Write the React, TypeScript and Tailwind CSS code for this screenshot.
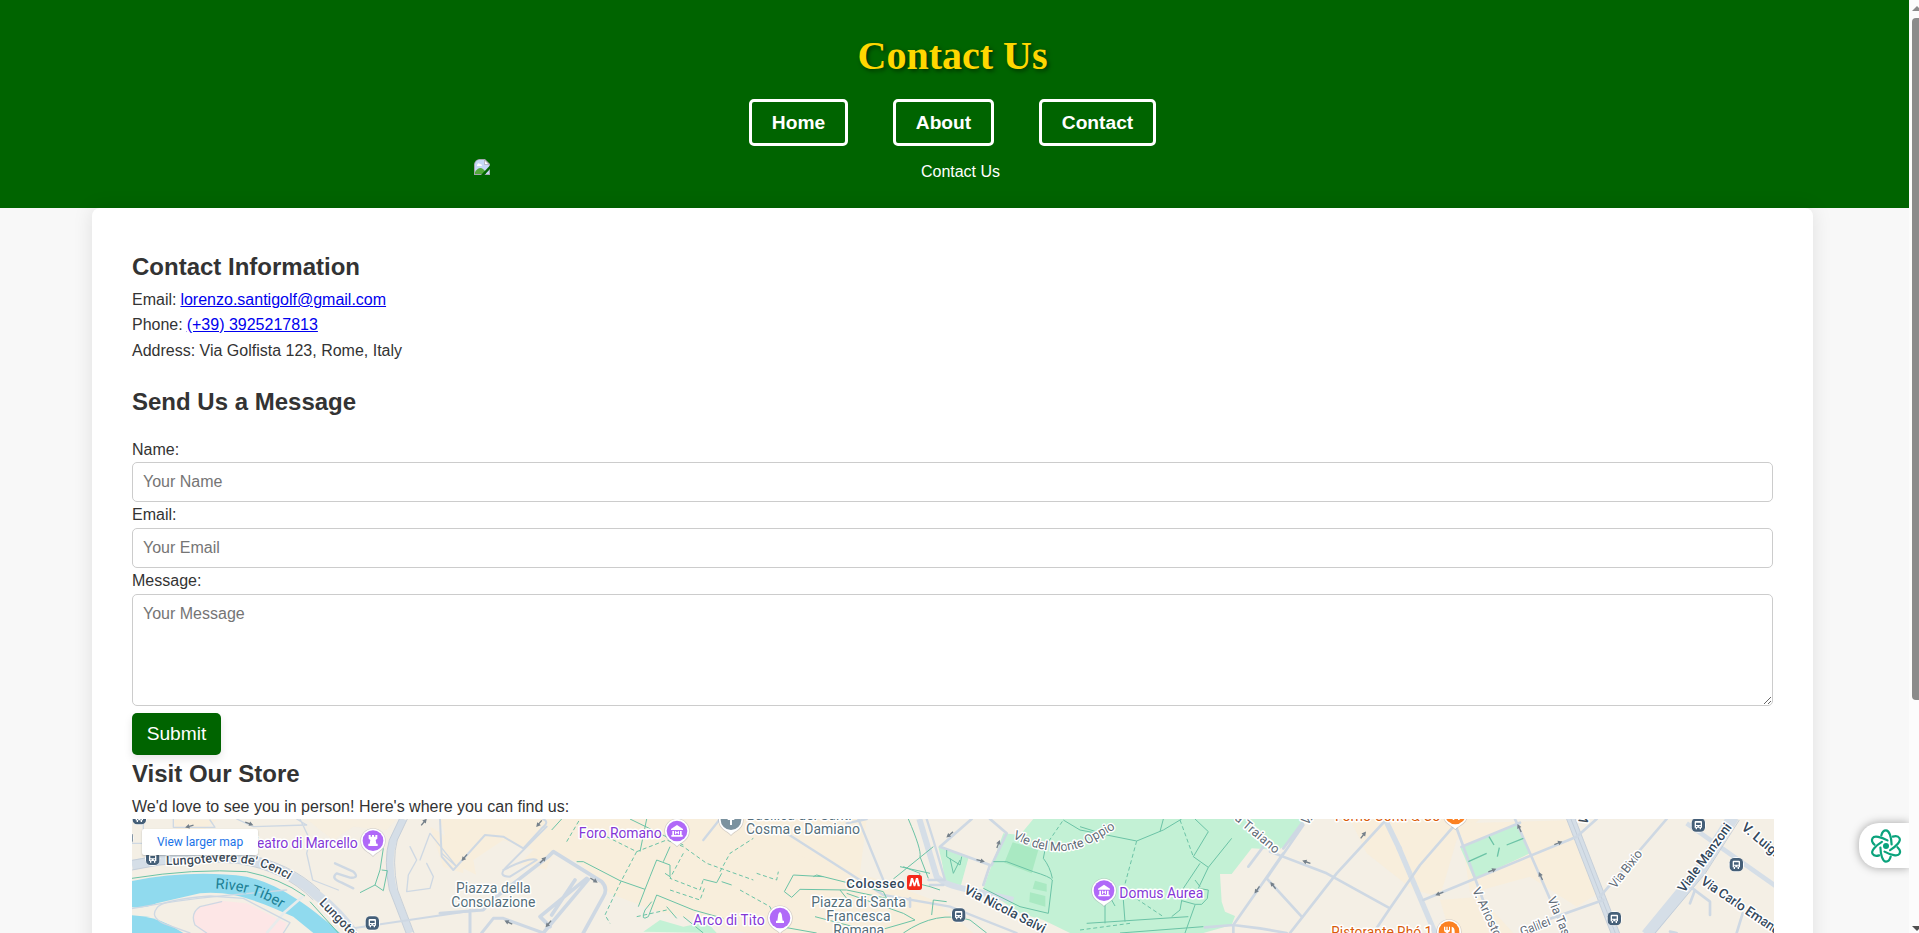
import React from "react";

const halo = "fill-none";

type LabelProps = {
  x: number;
  y: number;
  w: number;
  children: string;
  fill?: string;
  size?: number;
  rotate?: number;
  weight?: number;
};

function Label({ x, y, w, children, fill = "#546e7a", size = 42, rotate = 0, weight = 400 }: LabelProps) {
  return (
    <text
      x={x}
      y={y}
      transform={`rotate(${rotate} ${x} ${y})`}
      textLength={w}
      fill={fill}
      fontSize={size}
      fontWeight={weight}
      stroke="#fff"
      strokeWidth={9}
      strokeLinejoin="round"
      paintOrder="stroke"
    >
      {children}
    </text>
  );
}

function CurvedLabel({ id, d, w, children, fill, size = 38, weight = 500, outline = "#fff" }: { id: string; d: string; w: number; children: string; fill: string; size?: number; weight?: number; outline?: string }) {
  return (
    <>
      <path id={id} d={d} className={halo} />
      <text fill={fill} fontSize={size} fontWeight={weight} stroke={outline} strokeWidth={8} strokeLinejoin="round" paintOrder="stroke">
        <textPath href={`#${id}`} textLength={w}>{children}</textPath>
      </text>
    </>
  );
}

function Pin({ x, y, fill = "#b069f8", kind }: { x: number; y: number; fill?: string; kind: "museum" | "tower" | "info" | "food" | "obelisk" }) {
  return (
    <g transform={`translate(${x} ${y})`}>
      <path d="M0 49 C-5 42 -14 38 -24 30 A38 38 0 1 1 24 30 C14 38 5 42 0 49Z" fill="#8d8d99" opacity=".35" />
      <path d="M0 46 C-5 39 -14 36 -23 28 A36 36 0 1 1 23 28 C14 36 5 39 0 46Z" fill="#fff" />
      <circle r="31" fill={fill} />
      {kind === "museum" && <path d="M-18 -6 L0 -18 L18 -6 V-3 H-18Z M-14 0 H-9 V12 H-14Z M9 0 H14 V12 H9Z M-17 12 H17 V17 H-17Z M-6 10 V-1 L0 4 L6 -1 V10 H3 V5 L0 8 L-3 5 V10Z" fill="#fff" />}
      {kind === "tower" && <path d="M-13 -17 H-7 V-12 H-3 V-17 H3 V-12 H7 V-17 H13 V-6 L8 -2 L10 9 H14 V16 H-14 V9 H-10 L-8 -2 L-13 -6Z" fill="#fff" />}
      {kind === "obelisk" && <path d="M0 -19 L5 -12 L8 8 H12 V15 H-12 V8 H-8 L-5 -12Z" fill="#fff" />}
      {kind === "info" && <path d="M-3 -14 H3 V16 H-3Z M-10 -4 H10 V1 H-10Z" fill="#fff" />}
      {kind === "food" && <path d="M-15 -15 V-5 Q-15 2 -8 3 V18 H-3 V3 Q3 2 3 -5 V-15 H0 V-5 H-4 V-15 H-8 V-5 H-11 V-15Z M8 18 V-15 Q17 -13 17 0 V4 H13 V18Z" fill="#fff" />}
    </g>
  );
}

function Transit({ x, y }: { x: number; y: number }) {
  return (
    <g transform={`translate(${x} ${y})`}>
      <circle r="23" fill="#fff" />
      <rect x="-20" y="-20" width="40" height="40" rx="13" fill="#455f78" />
      <path d="M-8 -12 H8 Q11 -12 11 -9 V8 H8 V13 H4 V8 H-4 V13 H-8 V8 H-11 V-9 Q-11 -12 -8 -12Z" fill="#fff" />
      <path d="M-7 -7 H7 V0 H-7Z M-7 3 H-3 V6 H-7Z M3 3 H7 V6 H3Z" fill="#455f78" />
    </g>
  );
}

function Arrow({ x, y, r }: { x: number; y: number; r: number }) {
  return (
    <path transform={`translate(${x} ${y}) rotate(${r})`} d="M-13 -2 H0 V-7 L13 0 L0 7 V2 H-13Z" fill="#75808a" />
  );
}

const ROAD = "#ced8e3";
const PATH = "#6bc3a6";

function RomeMap() {
  return (
    <svg viewBox="36 27 4926 342" className="block h-full w-full" fontFamily="Roboto, sans-serif">
      <rect x="0" y="0" width="5000" height="400" fill="#f4efe5" />

      {/* built-up areas */}
      <g fill="#f8eedc">
        <path d="M560 27 H830 L800 60 L700 50 L640 90 L600 60Z" opacity=".6" />
        <path d="M960 27 H2240 L2220 190 L2120 369 H1880 L1600 300 L1480 255 L1380 200 L1190 160 L1080 200 L1000 160Z" />
        <path d="M1060 150 L1150 90 L1240 120 L1150 210 L1080 260Z" fill="#f4efe5" />
        <path d="M2010 130 L2280 210 L2440 270 L2560 369 H1900 L1960 200Z" />
        <path d="M1300 130 L1380 160 L1460 240 L1400 369 H1200 L1250 240Z" fill="#f4efe5" />
        <path d="M160 30 H290 L250 60 H170Z" />
        <path d="M930 50 L1030 110 V190 L970 170Z" />
        <path d="M3690 27 H4080 L4010 90 L3960 260 L3880 240 L3740 130Z" />
        <path d="M4020 40 L4360 30 L4450 240 L4370 290 L4230 200 L4050 250Z" />
        <path d="M3960 270 L4080 260 L4180 369 H3990Z" />
      </g>

      {/* parks */}
      <g fill="#c3f1d5">
        <path d="M2740 27 H3560 L3520 90 L3475 120 L3395 115 L3335 192 H3300 L3305 275 L3315 305 L3345 318 L3335 345 L3250 369 H2850 L2770 330 L2700 310 L2590 235 L2650 70 L2700 75Z" />
        <path d="M2460 110 L2540 140 L2545 145 L2523 225 L2475 215Z" />
        <path d="M2455 110 L2545 140 L2520 225 L2480 215Z" />
        <path d="M1570 365 L1620 330 L1690 350 L1760 335 L1790 369Z" />
        <path d="M4020 110 L4190 45 L4230 130 L4062 208Z" />
      </g>
      <g fill="#a9e9c2">
        <path d="M2678 97 L2755 120 L2735 190 L2653 158Z" />
        <path d="M2745 212 L2780 222 V245 L2738 236Z M2730 247 L2776 258 V290 L2728 276Z" />
      </g>

      {/* river */}
      <path d="M36 213 C150 190 270 185 380 200 C470 220 560 280 660 369 H580 L520 320 C430 280 340 240 240 250 L110 280 Q80 295 36 292Z" fill="#90daee" />
      <path d="M36 316 Q100 320 150 345 L190 369 H36Z" fill="#90daee" />
      <path d="M300 272 L380 280 L500 340 L490 369 H250 L225 345 Q210 310 240 290Z" fill="#fde6e6" />
      <path d="M490 310 L550 258 M490 310 L440 369" stroke="#e8ecec" strokeWidth="8" fill="none" />

      {/* wide roads */}
      <g fill="none" stroke="#d5dee7" strokeLinejoin="round">
        <path d="M36 165 Q200 130 360 145 Q500 170 590 255 Q660 310 700 369" strokeWidth="30" />
        <path d="M850 27 L820 90 Q800 150 820 240 L870 369" strokeWidth="22" />
        <path d="M4350 20 L4490 380" strokeWidth="24" />
        <path d="M4840 20 L4740 180 L4580 375" strokeWidth="36" />
        <path d="M4700 40 L4970 230" strokeWidth="14" />
        <path d="M3835 110 L3950 380" strokeWidth="16" />
        <path d="M3795 27 L3840 120" strokeWidth="16" />
        <path d="M2398 27 L2450 200 Q2470 225 2550 240 L2680 270" strokeWidth="18" />
      </g>
      <g fill="none" stroke="#bfcad6" strokeWidth="2.500">
        <path d="M36 151 Q200 116 365 131 Q510 156 600 242 M36 180 Q200 144 352 160 Q490 180 580 270" />
        <path d="M838 27 L808 90 Q790 150 808 240 L858 369 M862 27 L832 90 Q815 150 833 240 L882 369" />
        <path d="M4337 20 L4477 380 M4350 20 L4490 380 M4363 20 L4503 380" />
        <path d="M4858 30 L4756 190 L4600 375" />
      </g>

      {/* streets */}
      <g fill="none" stroke={ROAD} strokeWidth="6" strokeLinecap="round" strokeLinejoin="round">
        <path d="M36 100 H70 V40 M160 27 V52 H285 L270 30 M350 27 L400 50 L560 45 L530 27 M540 27 L570 90 L560 130 L578 210 L655 240 M36 296 Q170 270 320 256 L500 240" strokeWidth="4" />
        <path d="M645 160 L700 185 Q720 205 690 203 L650 190 Q630 205 665 218 L700 235" strokeWidth="7" />
        <path d="M110 295 Q120 270 270 258 L370 265 L510 338 L490 369 M110 295 Q90 320 130 340 L210 369 M305 275 L240 290 Q210 310 225 345 L260 369" strokeWidth="4" />
        <path d="M870 110 L890 150 L865 195 L860 245 L930 235 L940 200 L920 160 M900 150 L930 70 L1010 170 L965 130" strokeWidth="4" />
        <path d="M700 355 L1070 300 M960 27 L965 140 L1000 180 L1095 75 L1150 80 L1210 115 L1265 55 Q1290 35 1270 28 M1280 50 L1160 170 Q1130 200 1170 200 L1250 150 Q1230 140 1150 180" />
        <path d="M960 310 L1090 300 L1110 280 M1050 300 V369 M1085 369 L1120 325 L1150 325 L1270 369" strokeWidth="9" />
        <path d="M1110 275 L1285 140 L1300 125 L1445 215 Q1465 235 1450 260 L1390 369 M1400 205 L1260 320 L1290 350 M1405 208 L1270 369 M1295 315 L1365 210" strokeWidth="11" />
        <path d="M1800 27 L1750 90 M2000 70 L2290 255 L2490 290 L2690 369 M2215 27 L2290 210 M2180 40 L2240 27 M2420 27 L2440 90 L2475 210 H2425" strokeWidth="7" />
        <path d="M2555 27 L2460 110 L2610 165 L2590 225 M2610 27 L2660 70 L2615 165 M2430 225 H2470 M2370 265 V290" strokeWidth="8" />
        <path d="M3555 27 L3490 115 M3430 110 L3385 170 M3450 125 L3620 190 L3810 295 L3760 369 M3800 27 L3650 190 L3510 369 M3490 130 L3340 345 L3420 355 L3500 369 M3440 205 L3545 320 M3550 45 L3440 205 M3810 295 L3900 165 L4000 50 M3255 352 L3340 345 V369" strokeWidth="8" />
        <path d="M3910 270 L4370 80 L4430 27 M4010 55 L4100 300 M4185 27 L4335 369 M4025 110 L4200 38 M4450 270 L4280 330 M4440 260 L4640 27 M4710 230 L4770 275 V315 M4725 240 L4710 280 M4868 310 L4850 369 M4650 365 L4670 369" strokeWidth="8" />
      </g>

      {/* footpaths */}
      <g fill="none" stroke={PATH} strokeWidth="3">
        <path d="M36 205 Q220 175 380 185 Q480 205 555 258 M570 275 L655 369 M790 115 L780 180 L765 225 L720 248 M765 225 L790 242 L802 182 L785 180" />
        <path d="M1295 60 L1325 27 M1530 27 L1690 105 M1580 27 L1560 125 M1370 155 L1390 155 L1500 212 L1575 238 L1590 200 L1610 150 L1650 165 V200 L1635 190 M1575 238 L1555 290 M1610 255 L1720 300 L1810 325 M1610 255 L1585 320 Q1560 335 1575 300 L1595 275 M1640 290 L1670 325 M1690 320 L1750 369 M1650 110 L1630 155 M1750 208 L1790 218 L1805 190 M1805 215 L1835 225" />
        <path strokeDasharray="12 8" d="M1340 95 L1380 27 M1460 80 L1550 125 L1640 90 L1690 110 L1760 160 L1900 210 M1550 125 L1500 220 L1455 315 L1470 340 M1800 185 L1830 130 L1900 85 M1690 130 L1650 205 L1740 240 L1750 208 M1650 240 L1740 270 L1755 230 M1860 240 L1950 290 L1960 315 M1910 190 L1970 210 L1975 185 M1640 300 L1550 320" />
        <path d="M2365 27 Q2405 120 2400 140 L2425 205 M2320 207 L2440 110 M2350 170 L2400 190 L2390 220 L2430 230 L2460 240 M2340 170 L2430 190 M2080 200 L2090 195 L2290 245 L2300 265 L2180 240 L2040 238 L2015 262 L1993 245 L2020 195 L2110 200 M1955 345 L2090 369 M2180 250 L2350 310 L2385 330 L2250 369 M2160 240 L2180 265 M2085 320 L2200 350 M2350 369 Q2450 300 2550 330 L2600 369 M2435 315 L2440 270 L2480 275" />
        <path d="M2480 120 V140 L2520 165 L2525 140 M2490 145 L2500 190 L2520 150" />
        <path d="M2590 235 L2700 290 L2785 310 L2797 210 Q2790 200 2740 185 L2660 155 L2620 155 M2797 205 Q2790 170 2770 145 L2775 120 M2830 30 L2880 60 L2960 75 M2880 50 L2960 75 L3050 93 L3130 60 L3185 27 M3120 65 L3130 27 M3225 27 L3265 65 L3220 140 L3265 172 L3335 85 M3265 172 L3235 235 L3265 240 L3262 265 L3245 283 L3225 283 L3185 272 L3190 235 L3240 160 M3225 210 L3240 230 M3185 272 L3180 300 L3155 320 M3225 285 L3195 369 M2900 340 L3205 320 M3000 369 L3250 350 M2955 285 V340 M3010 270 L3015 335 M2975 270 L2985 288" />
        <path strokeDasharray="12 8" d="M3050 93 L3010 240 L3130 320 M3180 30 L3220 140 M2775 110 L2830 30 M2880 360 L3030 340" />
        <path d="M4045 155 L4100 130 M4107 80 L4122 105 M4138 113 L4132 140 M4160 105 L4210 85" strokeWidth="4" />
      </g>

      {/* one-way arrows */}
      <Arrow x={208} y={49} r={165} />
      <Arrow x={388} y={41} r={20} />
      <Arrow x={912} y={36} r={-50} />
      <Arrow x={1257} y={41} r={130} />
      <Arrow x={1033} y={143} r={130} />
      <Arrow x={1269} y={150} r={-45} />
      <Arrow x={1422} y={211} r={32} />
      <Arrow x={1165} y={337} r={205} />
      <Arrow x={1285} y={342} r={130} />
      <Arrow x={2489} y={74} r={140} />
      <Arrow x={2582} y={152} r={15} />
      <Arrow x={2635} y={102} r={-70} />
      <Arrow x={3559} y={156} r={200} />
      <Arrow x={3730} y={75} r={-52} />
      <Arrow x={3411} y={240} r={125} />
      <Arrow x={3459} y={226} r={232} />
      <Arrow x={3958} y={251} r={158} />
      <Arrow x={4117} y={181} r={-22} />
      <Arrow x={4315} y={99} r={-22} />
      <Arrow x={4198} y={54} r={245} />
      <Arrow x={4262} y={198} r={245} />

      {/* transit stops */}
      <Transit x={58} y={23} />
      <Transit x={18} y={84} />
      <Transit x={98} y={145} />
      <Transit x={757} y={339} />
      <Transit x={2516} y={315} />
      <Transit x={4735} y={45} />
      <Transit x={4849} y={164} />
      <Transit x={4483} y={326} />
      <rect x="2361" y="195" width="45" height="45" rx="8" fill="#f5291b" />
      <path d="M2367 229 L2373 204 H2379 L2383.500 220 L2388 204 H2394 L2400 229 H2393 L2390 215 L2386 229 H2381 L2377 215 L2374 229Z" fill="#fff" />

      {/* street and place names */}
      <CurvedLabel id="cenci" d="M138 165 Q210 165 290 155 Q420 152 510 212" w={378} fill="#3c4a57">Lungotevere de' Cenci</CurvedLabel>
      <CurvedLabel id="tiber" d="M286 236 Q400 240 484 296" w={208} size={44} weight={400} fill="#1c8094" outline="#90daee">River Tiber</CurvedLabel>
      <Label x={596} y={280} w={212} rotate={46} size={38} weight={500} fill="#3c4a57">Lungotevere</Label>
      <CurvedLabel id="oppio" d="M2677 84 Q2800 150 2900 105 L3000 48" w={332} fill="#5f6b76" weight={400}>Vle del Monte Oppio</CurvedLabel>
      <Label x={3342} y={28} w={162} rotate={40} size={38} fill="#5f6b76">a Traiano</Label>
      <Label x={3562} y={47} w={80} rotate={-50} size={38} fill="#5f6b76">V. Me</Label>
      <Label x={4398} y={46} w={40} rotate={-62} size={38} weight={500} fill="#3c4a57">Vi</Label>
      <Label x={2530} y={248} w={268} rotate={27} size={40} weight={500} fill="#33475b">Via Nicola Salvi</Label>
      <Label x={4056} y={240} w={160} rotate={65} size={38} fill="#5f6b76">V. Ariosto</Label>
      <Label x={4282} y={266} w={164} rotate={68} size={38} fill="#5f6b76">Via Tasso</Label>
      <Label x={4206} y={379} w={95} rotate={-22} size={38} fill="#5f6b76">Galilei</Label>
      <Label x={4486} y={238} w={135} rotate={-52} size={38} fill="#5f6b76">Via Bixio</Label>
      <Label x={4693} y={250} w={245} rotate={-54} size={40} weight={500} fill="#33475b">Viale Manzoni</Label>
      <Label x={4862} y={56} w={134} rotate={40} size={40} weight={500} fill="#33475b">V. Luigi</Label>
      <Label x={4740} y={220} w={328} rotate={34} size={40} weight={500} fill="#33475b">Via Carlo Emanuele</Label>
      <Label x={389} y={115} w={324} fill="#8437d6">Teatro di Marcello</Label>
      <Label x={1008} y={248} w={224}>Piazza della</Label>
      <Label x={994} y={291} w={252}>Consolazione</Label>
      <Label x={1376} y={84} w={249} fill="#8437d6">Foro Romano</Label>
      <Label x={1880} y={30} w={315}>Basilica dei Santi</Label>
      <Label x={1878} y={72} w={342}>Cosma e Damiano</Label>
      <Label x={1720} y={345} w={214} fill="#8437d6">Arco di Tito</Label>
      <Label x={2179} y={234} w={175} size={40} fill="#33475b" weight={500}>Colosseo</Label>
      <Label x={2074} y={291} w={284}>Piazza di Santa</Label>
      <Label x={2119} y={333} w={193}>Francesca</Label>
      <Label x={2140} y={375} w={152}>Romana</Label>
      <Label x={2998} y={264} w={252} fill="#8437d6">Domus Aurea</Label>
      <Label x={3645} y={33} w={316} fill="#d95c0b">Forno Conti &amp; Co</Label>
      <Label x={3634} y={382} w={303} fill="#d95c0b">Ristorante Rhó 1</Label>

      <Pin x={759} y={92} kind="tower" />
      <Pin x={1671} y={63} kind="museum" />
      <Pin x={1833} y={29} fill="#7b929f" kind="info" />
      <Pin x={1980} y={324} kind="obelisk" />
      <Pin x={2952} y={242} kind="museum" />
      <Pin x={4006} y={12} fill="#fb8123" kind="food" />
      <Pin x={3987} y={365} fill="#fb8123" kind="food" />
    </svg>
  );
}

function BrokenImage() {
  return (
    <svg width="16" height="16" viewBox="0 0 16 16" className="block shrink-0">
      <path d="M0 5 Q1 1 5 0 H11 L16 5 V16 H0Z" fill="#a5a5b0" />
      <path d="M1 5 Q2 1 5 1 H10.500 L15 5.500 V15 H1Z" fill="#c6d8f7" />
      <path d="M10.500 1 V5.500 H15Z" fill="#fff" stroke="#a5a5b0" strokeWidth=".7" />
      <path d="M3 6 Q4 3 6 5 Q8 5 8 7 H3Z" fill="#fff" />
      <path d="M1 15 V13 Q5 7 9 10 L12 13 V15Z" fill="#53a83a" />
      <path d="M7 16 L16 6.500 V10 L10.500 16Z" fill="#006400" />
    </svg>
  );
}

function AtomIcon() {
  return (
    <svg width="34" height="36" viewBox="-17 -18 34 36" fill="none" stroke="#0aa37c" strokeWidth="2.200" strokeLinecap="round">
      <circle r="3" fill="#0aa37c" stroke="none" />
      {[0, 60, 120, 180, 240, 300].map((angle) => (
        <path key={angle} transform={`rotate(${angle})`} d="M-4.700 -10.500 C-3.900 -13.800 -2 -15.600 0 -15.600 C3.300 -15.600 5.400 -9 5.600 -1.500" />
      ))}
    </svg>
  );
}

const navItems = [
  { label: "Home", width: "w-[99px]" },
  { label: "About", width: "w-[101px]" },
  { label: "Contact", width: "w-[117px]" },
];

const fieldStyle =
  "block w-full rounded-[5px] border border-[#ccc] bg-white px-[10px] text-base text-[#333] outline-none placeholder:text-[#757575]";

export default function App() {
  return (
    <div className="relative flex h-[933px] w-full overflow-hidden bg-[#f8f8f8] font-['Liberation_Sans',Arial,sans-serif] text-base leading-[25.6px] text-[#333]">
      <div className="flex h-full w-[1909px] shrink-0 flex-col">
        <header className="h-[208px] w-full shrink-0 bg-[#006400] pr-1 pt-6 text-white">
          <h1 className="h-16 text-center font-['Liberation_Serif',serif] text-[40px] font-bold leading-[64px] text-[#ffd700] [text-shadow:2px_2px_4px_rgba(0,0,0,0.5)]">
            Contact Us
          </h1>
          <nav className="mt-[11px] flex justify-center gap-[45px]">
            {navItems.map(({ label, width }) => (
              <a key={label} href="#" className={`${width} flex h-[47px] items-center justify-center rounded-[5px] border-[3px] border-white text-[19.2px] font-bold`}>
                {label}
              </a>
            ))}
          </nav>
          <div className="mx-auto mt-[13px] flex w-[957px]">
            <BrokenImage />
            <span className="flex-1 text-center">Contact Us</span>
          </div>
        </header>

        <main className="ml-[92px] h-[900px] w-[1721px] shrink-0 rounded-lg bg-white px-10 pt-10 shadow-[0_0_20px_rgba(0,0,0,0.1)]">
          <section>
            <h2 className="text-2xl font-bold leading-[38.4px]">Contact Information</h2>
            <p className="mt-[0.6px] h-[25px]">
              Email: <a href="#" className="-ml-[0.5px] text-[#0000ee] underline">lorenzo.santigolf@gmail.com</a>
            </p>
            <p>
              Phone: <a href="#" className="-ml-[0.5px] text-[#0000ee] underline">(+39) 3925217813</a>
            </p>
            <p>Address: Via Golfista 123, Rome, Italy</p>
          </section>

          <form className="mt-5" onSubmit={(e: React.FormEvent) => e.preventDefault()}>
            <h2 className="mb-[15px] text-2xl font-bold leading-[38.4px]">Send Us a Message</h2>
            <label className="block h-[25px]">Name:</label>
            <input className={`${fieldStyle} h-10`} placeholder="Your Name" />
            <label className="block h-[26px]">Email:</label>
            <input className={`${fieldStyle} h-10`} placeholder="Your Email" />
            <label className="block h-[26px]">Message:</label>
            <textarea className={`${fieldStyle} h-28 resize-y py-[10px] leading-[18px]`} placeholder="Your Message" />
            <button className="mt-[7px] block h-[42px] w-[89px] rounded-[5px] bg-[#006400] text-[19.2px] leading-[42px] text-white shadow-[0_4px_8px_rgba(0,0,0,0.1)]">
              Submit
            </button>
          </form>

          <section>
            <h2 className="text-2xl font-bold leading-[38.4px]">Visit Our Store</h2>
            <p className="mt-[1px] h-[25px]">We'd love to see you in person! Here's where you can find us:</p>
            <div className="relative h-[114px] w-[1642px] overflow-hidden">
              <RomeMap />
              <a href="#" className="absolute left-[10px] top-[10px] flex h-[26px] w-[116px] items-center justify-center rounded-[2px] bg-white font-['Roboto',sans-serif] text-xs text-[#1a73e8] shadow-[0_1px_2px_rgba(60,64,67,0.3)]">
                View larger map
              </a>
            </div>
          </section>
        </main>
      </div>

      <div className="flex h-full w-[10px] shrink-0 flex-col items-start overflow-hidden bg-[#fcfcfc] pl-[3px]">
        <svg width="10" height="5" viewBox="0 0 10 5" className="mt-[6px] shrink-0">
          <path d="M0 5 L5 0 L10 5Z" fill="#8b8b8b" />
        </svg>
        <div className="mt-[7px] h-[682px] w-[10px] rounded-[4px] bg-[#8b8b8b]" />
        <svg width="10" height="5" viewBox="0 0 10 5" className="mb-[2px] mt-auto shrink-0">
          <path d="M0 0 H10 L5 5Z" fill="#505050" />
        </svg>
      </div>

      <div className="absolute right-[10px] top-[823px] h-[45px] w-[50px] overflow-visible [clip-path:inset(-16px_0_-16px_-16px)]">
        <div className="flex h-full w-full items-center rounded-l-[20px] bg-white pl-[10px] shadow-[0_0_10px_rgba(0,0,0,0.35)]">
          <AtomIcon />
        </div>
      </div>
    </div>
  );
}
